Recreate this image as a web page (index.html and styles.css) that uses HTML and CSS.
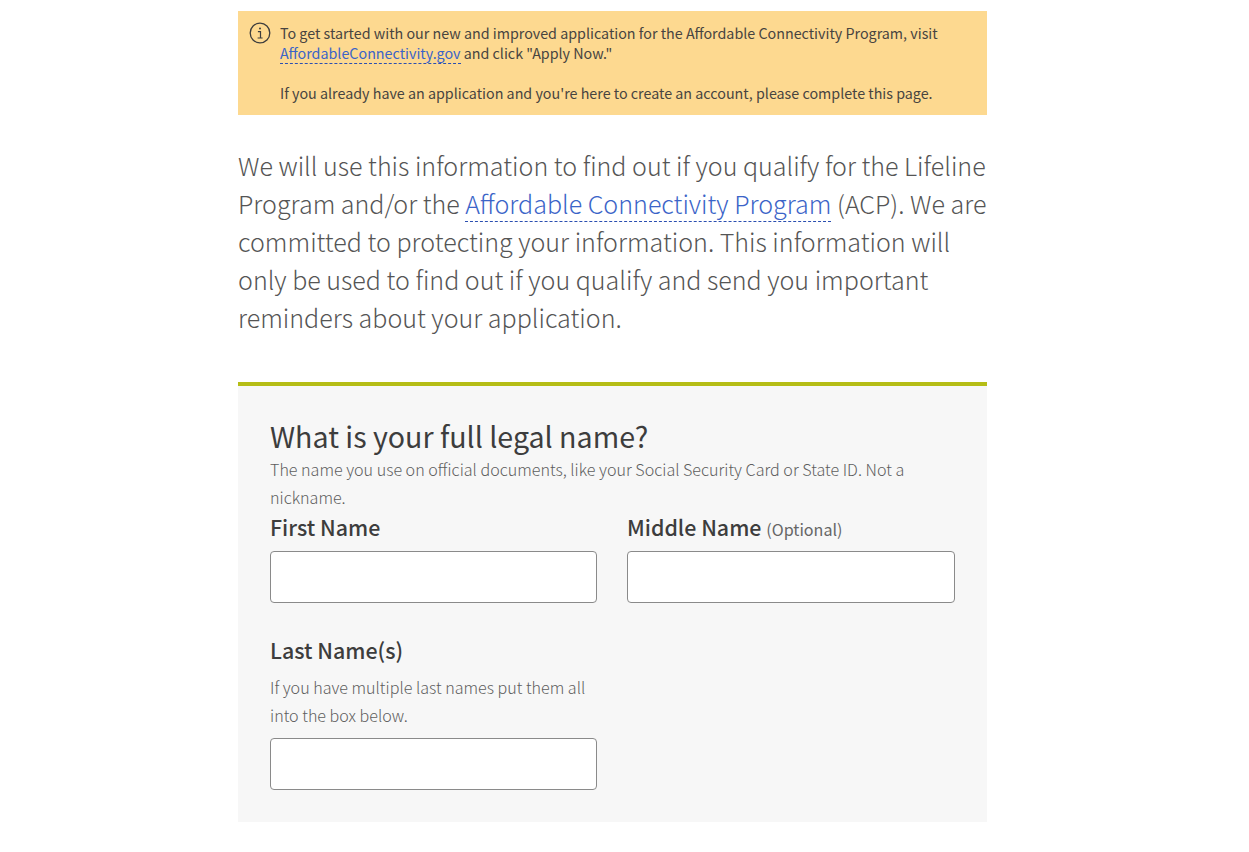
FILE: index.html
```html
<!DOCTYPE html>
<html lang="en">
<head>
  <meta charset="UTF-8" />
  <meta name="viewport" content="width=device-width, initial-scale=1.0" />
  <title>Lifeline Application</title>
  <link rel="stylesheet" href="styles.css">
</head>
<body>
  <main class="container">
    <div class="alert">
      <svg class="alert-icon" viewBox="0 0 22 22" width="22" height="22" aria-hidden="true">
        <circle cx="11" cy="11" r="9.8" fill="none" stroke="#3d3d3d" stroke-width="1.3"/>
        <circle cx="11" cy="6.6" r="1" fill="#3d3d3d"/>
        <path d="M8.9 9.6h2.6v6.3M8.6 16h5" fill="none" stroke="#3d3d3d" stroke-width="1.2"/>
      </svg>
      <div class="alert-text">
        <p>To get started with our new and improved application for the Affordable Connectivity Program, visit <a href="#">AffordableConnectivity.gov</a> and click "Apply Now."</p>
        <p>If you already have an application and you're here to create an account, please complete this page.</p>
      </div>
    </div>

    <p class="lead">We will use this information to find out if you qualify for the Lifeline Program and/or the <a href="#">Affordable Connectivity Program</a> (ACP). We are committed to protecting your information. This information will only be used to find out if you qualify and send you important reminders about your application.</p>

    <form class="card">
      <h2>What is your full legal name?</h2>
      <p class="hint">The name you use on official documents, like your Social Security Card or State ID. Not a nickname.</p>
      <div class="fields">
        <div class="field">
          <label for="first-name">First Name</label>
          <input id="first-name" type="text">
        </div>
        <div class="field">
          <label for="middle-name">Middle Name <span class="optional">(Optional)</span></label>
          <input id="middle-name" type="text">
        </div>
        <div class="field">
          <label for="last-name">Last Name(s)</label>
          <p class="hint field-hint">If you have multiple last names put them all into the box below.</p>
          <input id="last-name" type="text">
        </div>
      </div>
    </form>
  </main>
</body>
</html>
```

FILE: styles.css
```css
body {
  font-family: "Noto Sans CJK SC", "Noto Sans", sans-serif;
  background: #fff;
  color: #3d3d3d;
  margin: 0;
}
.container {
  width: 749px;
  margin: 0 0 0 238px;
  padding: 11px 0 30px;
}
a {
  color: #3b64c8;
  text-decoration: none;
  border-bottom: 1px dashed #2b4fb0;
}
.alert {
  display: flex;
  gap: 9px;
  background: #fdd990;
  padding: 12px 11px 12px;
  font-size: 14.3px;
  line-height: 20px;
  color: #474440;
}
.alert-icon {
  flex: none;
  margin-top: -1px;
}
.alert-text p {
  margin: 0 0 20px;
}
.alert-text p:last-child {
  margin-bottom: 0;
}
.alert a {
  line-height: 1;
}
.lead {
  font-size: 25.05px;
  font-weight: 300;
  line-height: 38px;
  margin: 31px 0 46px;
  color: #555;
}
.lead a {
  line-height: 1;
}
.card {
  background: #f7f7f7;
  border-top: 4px solid #b5bd16;
  padding: 30px 32px 32px;
}
.card h2 {
  font-size: 28.6px;
  font-weight: 400;
  line-height: 39px;
  margin: 0;
}
.hint {
  font-size: 16.1px;
  font-weight: 300;
  line-height: 28px;
  margin: 0;
  color: #5e5e5e;
}
.fields {
  display: grid;
  grid-template-columns: 327px 328px;
  column-gap: 30px;
  row-gap: 32px;
  margin-top: 1px;
}
.field label {
  display: block;
  font-size: 21.4px;
  font-weight: 500;
  line-height: 30px;
  margin-bottom: 9px;
}
.optional {
  font-size: 16.1px;
  font-weight: 400;
  line-height: 1;
  color: #666;
}
.field-hint {
  margin: -1px 0 9px;
}
.field input {
  display: block;
  box-sizing: border-box;
  width: 100%;
  height: 52px;
  background: #fff;
  border: 1px solid #8a8a8a;
  border-radius: 4px;
}
```
